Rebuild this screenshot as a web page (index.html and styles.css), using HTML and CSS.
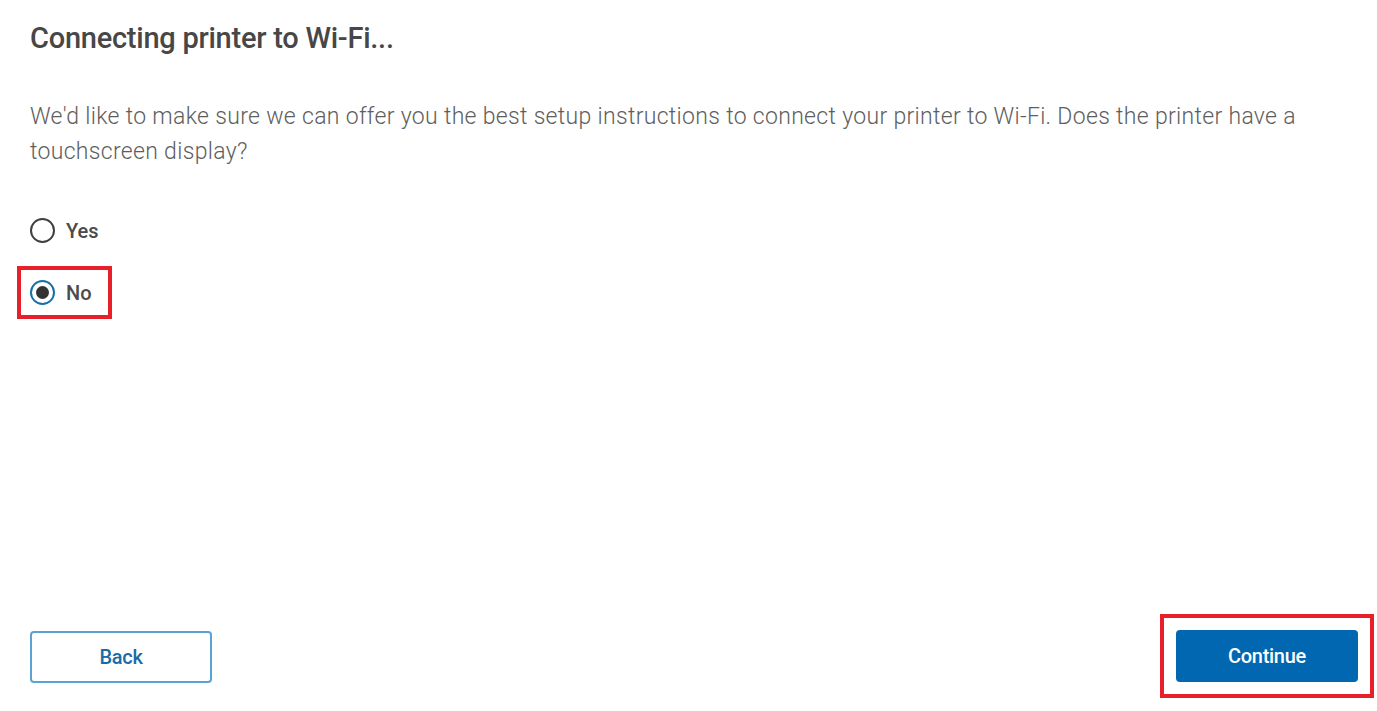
FILE: index.html
```html
<!DOCTYPE html>
<html lang="en">

<head>
    <meta charset="UTF-8" />
    <meta name="viewport" content="width=device-width, initial-scale=1" />
    <title>Connecting printer to Wi-Fi</title>
    <link rel="stylesheet" href="styles.css">
</head>

<body>
    <div class="page">
        <main class="main-content">
            <h1 class="title">Connecting printer to Wi-Fi...</h1>
            <p class="intro">We'd like to make sure we can offer you the best setup instructions to connect your printer to Wi-Fi. Does the printer have a touchscreen display?</p>

            <div class="options">
                <label class="option">
                    <input type="radio" name="touchscreen" class="radio-input">
                    <span class="radio"></span>
                    <span>Yes</span>
                </label>
                <label class="option option-marked">
                    <input type="radio" name="touchscreen" class="radio-input" checked>
                    <span class="radio"></span>
                    <span>No</span>
                </label>
            </div>
        </main>

        <footer class="footer">
            <button class="btn btn-secondary">Back</button>
            <div class="marked">
                <button class="btn btn-primary">Continue</button>
            </div>
        </footer>
    </div>
</body>
</html>
```

FILE: styles.css
```css
:root {
    --text: #5e5e5e;
    --heading: #474747;
    --blue: #0067b0;
    --blue-light: #5aa2d4;
    --mark: #e8202a;
}

* {
    margin: 0;
    padding: 0;
    box-sizing: border-box;
}

body {
    font-family: 'Roboto', 'Liberation Sans', sans-serif;
    background-color: white;
    color: var(--text);
}

.page {
    height: 100vh;
    padding: 21px 19px 28px 30px;
    display: flex;
    flex-direction: column;
    justify-content: space-between;
}

.title {
    font-size: 29px;
    font-weight: 500;
    color: var(--heading);
    letter-spacing: -0.25px;
    line-height: 34px;
}

.intro {
    margin-top: 44px;
    font-size: 23px;
    font-weight: 300;
    line-height: 35px;
    letter-spacing: 0.32px;
    max-width: 1310px;
}

.options {
    margin-top: 49px;
    display: flex;
    flex-direction: column;
    align-items: flex-start;
    gap: 36px;
}

.option {
    display: flex;
    align-items: center;
    gap: 11px;
    font-size: 20px;
    font-weight: 500;
    color: #4a4a4a;
    line-height: 24px;
    cursor: pointer;
}

.radio-input {
    display: none;
}

.radio {
    position: relative;
    width: 25px;
    height: 25px;
    border: 2px solid #3f3f3f;
    border-radius: 50%;
}

.radio-input:checked+.radio {
    border-color: #1472ab;
}

.radio-input:checked+.radio::before {
    content: '';
    position: absolute;
    top: 4px;
    left: 4px;
    width: 13px;
    height: 13px;
    border-radius: 50%;
    background-color: #333;
}

.option-marked {
    outline: 4px solid var(--mark);
    outline-offset: 9px;
    padding: 1px 7px 1px 0;
}

.footer {
    display: flex;
    justify-content: space-between;
    align-items: flex-end;
}

.marked {
    outline: 4px solid var(--mark);
    outline-offset: 12px;
    margin-bottom: 1px;
}

.btn {
    width: 182px;
    height: 52px;
    font-family: inherit;
    font-size: 20px;
    font-weight: 500;
    letter-spacing: -0.3px;
    border-radius: 4px;
    cursor: pointer;
}

.btn-secondary {
    background-color: white;
    color: #1a6ba5;
    border: 2px solid var(--blue-light);
}

.btn-primary {
    background-color: var(--blue);
    color: white;
    border: none;
}
```
